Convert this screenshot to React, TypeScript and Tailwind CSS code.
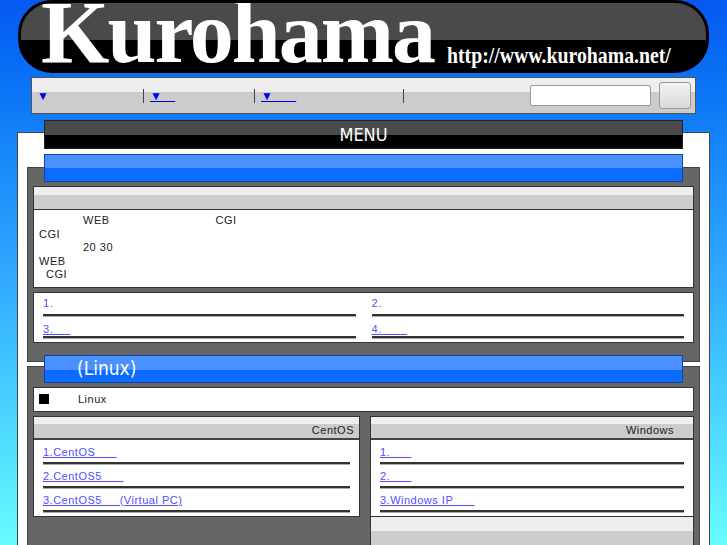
export default function App() {
  const sans = { fontFamily: '"Liberation Sans", Arial, sans-serif' };
  const line = "border-b-2 border-[#333] shadow-[0_1px_0_#aaa]";
  return (
    <div className="w-[727px] h-[545px] overflow-hidden bg-gradient-to-b from-[#0858f0] via-[#30a8ff] to-[#68fcff] relative" style={sans}>
      {/* header */}
      <div className="mx-[18px] mt-0 h-[73px] rounded-[34px] border-[3px] border-black bg-[linear-gradient(#4a4a4a_0,#4a4a4a_55%,#000_55%)] relative overflow-hidden">
        <div className="absolute left-[20px] top-[-14px] text-white font-bold text-[88px] leading-none tracking-[-2px] whitespace-nowrap" style={{ fontFamily: '"Liberation Serif", serif' }}>Kurohama</div>
        <div className="absolute left-[426px] bottom-[3px] text-white font-bold text-[23px] leading-none whitespace-nowrap scale-x-[0.86] origin-left" style={{ fontFamily: '"Liberation Serif", serif' }}>http://www.kurohama.net/</div>
      </div>
      {/* nav */}
      <div className="mx-[31px] mt-[4px] h-[37px] border border-[#555] bg-[linear-gradient(#eee_0,#eee_40%,#ccc_40%)] flex items-center text-[12px] pl-[5px]">
        <span className="text-[#0000ee] w-[106px]">▼</span>
        <span className="w-[1px] h-[14px] bg-[#444] mr-[6px]"></span>
        <span className="text-[#0000ee] underline w-[104px]">▼&nbsp;&nbsp;&nbsp;&nbsp;</span>
        <span className="w-[1px] h-[14px] bg-[#444] mr-[6px]"></span>
        <span className="text-[#0000ee] underline w-[142px]">▼&nbsp;&nbsp;&nbsp;&nbsp;&nbsp;&nbsp;&nbsp;</span>
        <span className="w-[1px] h-[14px] bg-[#444]"></span>
        <div className="ml-auto mr-[4px] flex items-center gap-[8px]">
          <div className="w-[121px] h-[21px] bg-white border border-[#999] rounded-[2px]"></div>
          <div className="w-[32px] h-[27px] rounded-[3px] border border-[#999] bg-[linear-gradient(#f4f4f4,#d8d8d8)]"></div>
        </div>
      </div>
      {/* white container */}
      <div className="mx-[17px] mt-[18px] h-[420px] bg-white border border-[#444] px-[9px] relative">
        <div className="mx-[17px] -mt-[13px] h-[29px] border border-[#222] bg-[linear-gradient(#4a4a4a_0,#4a4a4a_50%,#000_50%)] text-white text-[18px] flex items-center justify-center" style={{ fontFamily: '"DejaVu Sans Condensed", "Liberation Sans", sans-serif' }}>MENU</div>
        <div className="relative mt-[5px]">
          <div className="mx-[17px] h-[28px] border border-[#1144aa] bg-[linear-gradient(#4a90ff_0,#4a90ff_50%,#0c6cff_50%)] relative z-10"></div>
          <div className="-mt-[15px] bg-[#666] border border-[#444] px-[5px] pt-[18px] pb-[18px]">
            <div className="bg-white border border-[#333]">
              <div className="h-[23px] bg-[linear-gradient(#eee_0,#eee_35%,#ccc_35%)] border-b border-[#333]"></div>
              <div className="text-[11px] leading-[13.5px] text-[#222] px-[5px] pt-[4px] pb-[5px] tracking-[0.5px]">
                <div><span className="inline-block w-[44px]"></span>WEB<span className="inline-block w-[106px]"></span>CGI</div>
                <div>CGI</div>
                <div><span className="inline-block w-[44px]"></span>20 30</div>
                <div>WEB</div>
                <div>&nbsp;&nbsp;CGI</div>
              </div>
            </div>
            <div className="mt-[4px] bg-white border border-[#333] grid grid-cols-2 gap-x-[16px] px-[9px] pt-[2px] pb-[4px] text-[11px] text-[#5050ff] tracking-[1px]">
              <div className={`h-[21px] ${line}`}>1.</div>
              <div className={`h-[21px] ${line}`}>2.</div>
              <div className={`h-[22px] pt-[5px] ${line}`}><span className="underline">3.&nbsp;&nbsp;&nbsp;&nbsp;</span></div>
              <div className={`h-[22px] pt-[5px] ${line}`}><span className="underline">4.&nbsp;&nbsp;&nbsp;&nbsp;&nbsp;&nbsp;</span></div>
            </div>
          </div>
        </div>
        <div className="relative mt-[-7px]">
          <div className="mx-[17px] h-[28px] border border-[#1144aa] bg-[linear-gradient(#4a90ff_0,#4a90ff_55%,#0c6cff_55%)] relative z-10 text-white text-[19px] pl-[32px] flex items-center" style={{ fontFamily: '"DejaVu Sans Condensed", "Liberation Sans", sans-serif' }}>(Linux)</div>
          <div className="-mt-[17px] h-[200px] bg-[#666] border border-[#444] px-[5px] pt-[20px]">
            <div className="h-[25px] bg-white border border-[#333] flex items-center px-[5px] text-[11px] text-[#222] tracking-[0.5px]">
              <span className="w-[10px] h-[10px] bg-black mr-[29px]"></span>Linux
            </div>
            <div className="mt-[4px] flex gap-[10px] items-start">
              <div className="w-[327px] bg-white border border-[#333]">
                <div className="h-[23px] bg-[linear-gradient(#eee_0,#eee_35%,#ccc_35%)] border-b-2 border-[#444] text-[11px] text-[#222] text-right pr-[5px] pt-[5px] tracking-[0.5px]">CentOS</div>
                <div className="px-[9px] text-[11px] text-[#5050ff] tracking-[0.5px]">
                  {["1.CentOS\u00a0\u00a0\u00a0\u00a0\u00a0\u00a0", "2.CentOS5\u00a0\u00a0\u00a0\u00a0\u00a0\u00a0", "3.CentOS5\u00a0\u00a0\u00a0\u00a0\u00a0(Virtual PC)"].map((t) => (
                    <div key={t} className={`h-[24px] pt-[4px] ${line}`}><span className="underline">{t}</span></div>
                  ))}
                  <div className="h-[4px]"></div>
                </div>
              </div>
              <div className="flex-1 bg-white border border-[#333]">
                <div className="h-[23px] bg-[linear-gradient(#eee_0,#eee_35%,#ccc_35%)] border-b-2 border-[#444] text-[11px] text-[#222] text-right pr-[19px] pt-[5px] tracking-[0.5px]">Windows</div>
                <div className="px-[9px] text-[11px] text-[#5050ff] tracking-[0.5px]">
                  {["1.\u00a0\u00a0\u00a0\u00a0\u00a0\u00a0", "2.\u00a0\u00a0\u00a0\u00a0\u00a0\u00a0", "3.Windows IP\u00a0\u00a0\u00a0\u00a0\u00a0\u00a0"].map((t) => (
                    <div key={t} className={`h-[24px] pt-[4px] ${line}`}><span className="underline">{t}</span></div>
                  ))}
                  <div className="h-[4px]"></div>
                </div>
                <div className="h-[40px] border-t border-[#333] bg-[linear-gradient(#eee_0,#eee_35%,#ccc_35%)]"></div>
              </div>
            </div>
          </div>
        </div>
      </div>
    </div>
  );
}
